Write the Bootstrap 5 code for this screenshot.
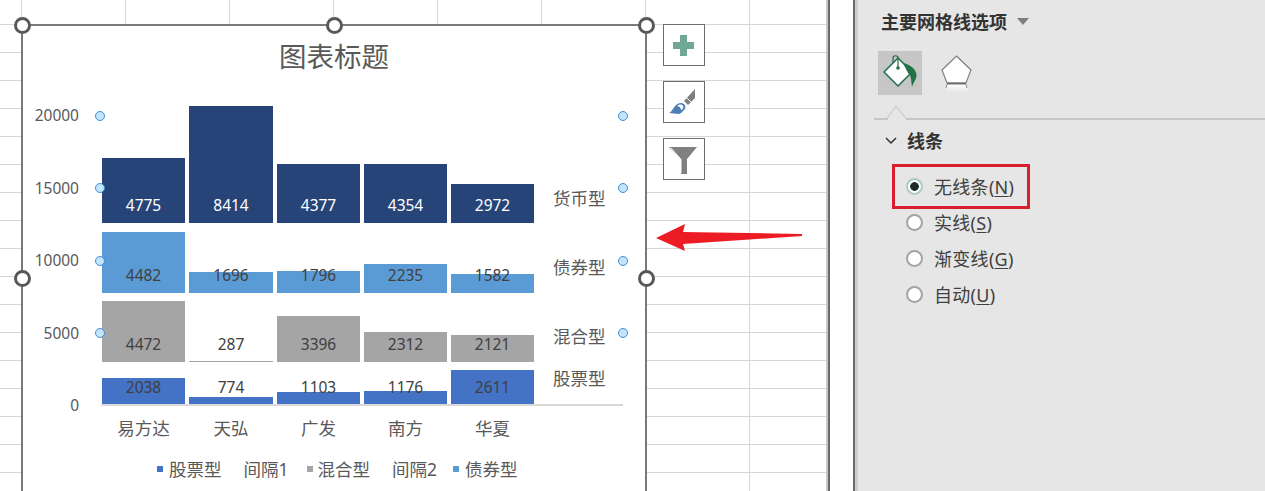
<!DOCTYPE html>
<html lang="zh-CN">
<head>
    <meta charset="UTF-8" />
    <title>图表标题</title>
    <link rel="stylesheet" href="https://cdn.jsdelivr.net/npm/bootstrap@5.3.0/dist/css/bootstrap.min.css" />
    <style>
        html, body { height: 491px; overflow: hidden; }
        body { font-family: "Noto Sans", "Noto Sans CJK SC", sans-serif; background: #fff; color: #404040; }

        /* worksheet */
        .sheet-frame { width: 830px; border-right: 2px solid #6a6a6a; }
        .sheet-area {
            border-right: 2px solid #c8c8c8;
            background-image: linear-gradient(#d6d6d6 1px, transparent 1px), linear-gradient(90deg, #d6d6d6 1px, transparent 1px);
            background-size: 104px 28px;
            background-position: 21px 24px;
        }
        .sheet-gutter { width: 23px; }

        /* chart */
        .chart-box { left: 21px; top: 24px; width: 626px; height: 520px; background: #fff; border: 2px solid #7a7a7a; }
        .chart-title { margin-top: 11px; height: 40px; line-height: 40px; font-size: 27.5px; color: #595959; text-align: center; }
        .plot-row { margin-top: 26px; }
        .y-axis { width: 56px; height: 314px; font-size: 15.5px; line-height: 24px; color: #595959; text-align: right; }
        .plot-body { margin: 3px 0 0 23px; }
        .bar-band { display: grid; grid-template-columns: 83px 84px 83px 83px 83px 85px; column-gap: 4px; }
        .band-a { height: 117px; }
        .band-b { height: 70px; }
        .band-c { height: 69px; }
        .band-d { height: 42px; }
        .bar-cell { position: relative; display: flex; align-items: flex-end; }
        .bar-fill { width: 100%; }
        .fill-navy { background: #264478; }
        .fill-sky { background: #5b9bd5; }
        .fill-grey { background: #a5a5a5; }
        .fill-blue { background: #4472c4; }
        .bar-num { position: absolute; left: 0; right: 0; bottom: 6px; font-size: 15.5px; line-height: 24px; text-align: center; color: #404040; }
        .band-a .bar-num { color: #fff; }
        .band-d .bar-num { bottom: 5px; }
        .series-name { align-self: flex-end; padding: 0 0 14px 15px; font-size: 17.5px; line-height: 24px; color: #595959; white-space: nowrap; }
        .band-a .series-name { padding-bottom: 13px; }
        .axis-line { width: 522px; margin-left: -1px; border-top: 2px solid #d9d9d9; }
        .cat-row { margin-top: 10px; }
        .cat-name { font-size: 17.5px; line-height: 24px; color: #595959; text-align: center; }
        .chart-legend { margin: 17px 0 0 134px; font-size: 17.5px; line-height: 24px; color: #595959; }
        .legend-swatch { width: 6px; height: 6px; margin-right: 6px; }
        .legend-swatch.snug { margin-right: 5px; }
        .legend-item { margin-right: 22px; }
        .legend-item.gap-wide { margin-right: 18px; }
        .legend-item.gap-thin { margin-right: 16px; }

        /* selection handles */
        .grip { position: absolute; width: 17px; height: 17px; margin: -8.5px 0 0 -8.5px; background: #fff; border: 3px solid #595959; border-radius: 50%; }
        .grip-l { left: -1px; }
        .grip-c { left: 311px; }
        .grip-r { left: 623px; }
        .grip-t { top: -1px; }
        .grip-m { top: 252px; }
        .pin { position: absolute; width: 10px; height: 10px; margin: -5px 0 0 -5px; background: #c3e4fb; border: 1px solid #3d8fd6; border-radius: 50%; }
        .pin-l { left: 77px; }
        .pin-r { left: 600px; }
        .pin-1 { top: 90px; }
        .pin-2 { top: 162px; }
        .pin-3 { top: 235px; }
        .pin-4 { top: 307px; }

        .chart-tools { left: 663px; top: 24px; gap: 15px; }
        .tool-btn { width: 42px; height: 42px; padding: 0; background: #fff; border: 1px solid #6d6d6d; border-radius: 0; line-height: 0; }
        .note-arrow { left: 656px; top: 222px; }

        /* format pane */
        .pane-side { border-left: 2px solid #6a6a6a; }
        .pane-body { border-left: 3px solid #cdcdcd; background: #e6e6e6; padding: 10px 0 0 23px; }
        .pane-title { font-size: 18px; line-height: 24px; font-weight: 700; color: #333; gap: 10px; }
        .pane-caret { width: 0; height: 0; border-left: 6.5px solid transparent; border-right: 6.5px solid transparent; border-top: 7px solid #7f7f7f; margin-top: -2px; }
        .pane-tabs { margin: 17px 0 0 -3px; gap: 17px; }
        .tab-on { width: 44px; height: 44px; background: #c6c6c6; }
        .tab-off { width: 34px; height: 44px; }
        .pane-rule { display: block; margin: 9px 0 0 -7px; }
        .section-head { margin-top: 9px; font-size: 18px; line-height: 24px; font-weight: 700; color: #333; }
        .section-chevron { margin: 0 10px 0 4px; }
        .radio-list { margin-top: 16px; }
        .radio-row { position: relative; height: 36px; margin: 0 0 0 25px; padding: 0; gap: 11px; font-size: 18px; letter-spacing: .3px; color: #404040; }
        .radio-row .form-check-input {
            width: 17px; height: 17px; margin: -2px 0 0; float: none; flex: none;
            background-color: #fff; border: 2px solid #a3a3a3;
        }
        .radio-row .form-check-input:checked {
            background-color: #fff; border-color: #a9cdbb;
            --bs-form-check-bg-image: radial-gradient(circle, #1e2b26 0, #1e2b26 4px, transparent 4.6px);
        }
        .radio-row u { text-underline-offset: 2px; }
        .mark-box { position: absolute; left: -14px; top: -5px; width: 138px; height: 45px; border: 3px solid #d81f2e; pointer-events: none; }
    </style>
</head>
<body>

<div class="d-flex" style="height:491px">
    <div class="sheet-frame flex-shrink-0 d-flex">
        <div class="sheet-area flex-grow-1 position-relative overflow-hidden">

            <div class="chart-box position-absolute">
                <div class="chart-title">图表标题</div>

                <div class="plot-row d-flex">
                    <div class="y-axis d-flex flex-column justify-content-between">
                        <div>20000</div>
                        <div>15000</div>
                        <div>10000</div>
                        <div>5000</div>
                        <div>0</div>
                    </div>
                    <div class="plot-body">
                        <div class="bar-band band-a">
                            <div class="bar-cell"><div class="bar-fill fill-navy" style="height:65px"></div><span class="bar-num">4775</span></div>
                            <div class="bar-cell"><div class="bar-fill fill-navy" style="height:117px"></div><span class="bar-num">8414</span></div>
                            <div class="bar-cell"><div class="bar-fill fill-navy" style="height:59px"></div><span class="bar-num">4377</span></div>
                            <div class="bar-cell"><div class="bar-fill fill-navy" style="height:59px"></div><span class="bar-num">4354</span></div>
                            <div class="bar-cell"><div class="bar-fill fill-navy" style="height:39px"></div><span class="bar-num">2972</span></div>
                            <div class="series-name">货币型</div>
                        </div>
                        <div class="bar-band band-b">
                            <div class="bar-cell"><div class="bar-fill fill-sky" style="height:61px"></div><span class="bar-num">4482</span></div>
                            <div class="bar-cell"><div class="bar-fill fill-sky" style="height:21px"></div><span class="bar-num">1696</span></div>
                            <div class="bar-cell"><div class="bar-fill fill-sky" style="height:22px"></div><span class="bar-num">1796</span></div>
                            <div class="bar-cell"><div class="bar-fill fill-sky" style="height:29px"></div><span class="bar-num">2235</span></div>
                            <div class="bar-cell"><div class="bar-fill fill-sky" style="height:19px"></div><span class="bar-num">1582</span></div>
                            <div class="series-name">债券型</div>
                        </div>
                        <div class="bar-band band-c">
                            <div class="bar-cell"><div class="bar-fill fill-grey" style="height:61px"></div><span class="bar-num">4472</span></div>
                            <div class="bar-cell"><div class="bar-fill fill-grey" style="height:1px"></div><span class="bar-num">287</span></div>
                            <div class="bar-cell"><div class="bar-fill fill-grey" style="height:46px"></div><span class="bar-num">3396</span></div>
                            <div class="bar-cell"><div class="bar-fill fill-grey" style="height:30px"></div><span class="bar-num">2312</span></div>
                            <div class="bar-cell"><div class="bar-fill fill-grey" style="height:27px"></div><span class="bar-num">2121</span></div>
                            <div class="series-name">混合型</div>
                        </div>
                        <div class="bar-band band-d">
                            <div class="bar-cell"><div class="bar-fill fill-blue" style="height:26px"></div><span class="bar-num">2038</span></div>
                            <div class="bar-cell"><div class="bar-fill fill-blue" style="height:7px"></div><span class="bar-num">774</span></div>
                            <div class="bar-cell"><div class="bar-fill fill-blue" style="height:12px"></div><span class="bar-num">1103</span></div>
                            <div class="bar-cell"><div class="bar-fill fill-blue" style="height:13px"></div><span class="bar-num">1176</span></div>
                            <div class="bar-cell"><div class="bar-fill fill-blue" style="height:34px"></div><span class="bar-num">2611</span></div>
                            <div class="series-name">股票型</div>
                        </div>
                        <div class="axis-line"></div>
                        <div class="bar-band cat-row">
                            <div class="cat-name">易方达</div>
                            <div class="cat-name">天弘</div>
                            <div class="cat-name">广发</div>
                            <div class="cat-name">南方</div>
                            <div class="cat-name">华夏</div>
                        </div>
                    </div>
                </div>

                <div class="chart-legend d-flex align-items-center">
                    <div class="legend-item d-flex align-items-center"><span class="legend-swatch fill-blue"></span>股票型</div>
                    <div class="legend-item gap-wide">间隔1</div>
                    <div class="legend-item d-flex align-items-center"><span class="legend-swatch snug fill-grey"></span>混合型</div>
                    <div class="legend-item gap-thin">间隔2</div>
                    <div class="legend-item d-flex align-items-center"><span class="legend-swatch fill-sky"></span>债券型</div>
                </div>

                <span class="grip grip-l grip-t"></span>
                <span class="grip grip-c grip-t"></span>
                <span class="grip grip-r grip-t"></span>
                <span class="grip grip-l grip-m"></span>
                <span class="grip grip-r grip-m"></span>
                <span class="pin pin-l pin-1"></span>
                <span class="pin pin-l pin-2"></span>
                <span class="pin pin-l pin-3"></span>
                <span class="pin pin-l pin-4"></span>
                <span class="pin pin-r pin-1"></span>
                <span class="pin pin-r pin-2"></span>
                <span class="pin pin-r pin-3"></span>
                <span class="pin pin-r pin-4"></span>
            </div>

            <div class="chart-tools position-absolute d-flex flex-column">
                <button type="button" class="btn tool-btn" aria-label="chart elements">
                    <svg width="40" height="40" viewBox="0 0 40 40"><path fill="#6fa894" d="M16 10h7v7h7v7h-7v7h-7v-7H9v-7h7z"/></svg>
                </button>
                <button type="button" class="btn tool-btn" aria-label="chart styles">
                    <svg width="40" height="40" viewBox="0 0 40 40">
                        <path fill="#7f7f7f" d="M31 7v9l-7 7-4-4z"/>
                        <path stroke="#fff" stroke-width="1" d="M22 15l5 5"/>
                        <path fill="#4d7fb5" d="M5 31c3-1 4-5 7-8 2-2 6-3 8-1 2 2 2 5-1 7-1 1-3 3-4 3z"/>
                        <path fill="#fff" d="M13 24c2-2 5-2 6 0 1 2-1 4-2 4 0-2-2-4-4-4z"/>
                    </svg>
                </button>
                <button type="button" class="btn tool-btn" aria-label="chart filters">
                    <svg width="40" height="40" viewBox="0 0 40 40">
                        <path fill="#808080" d="M5 8h28L23 20v15h-6V20z"/>
                        <path fill="none" stroke="#fff" stroke-width="1" d="M7 9l10 11.500V34"/>
                    </svg>
                </button>
            </div>

            <svg class="note-arrow position-absolute" width="148" height="30" viewBox="0 0 148 30">
                <path fill="#ed1c24" d="M0 16L29 2 27 10 146 12v2L27 22 29 29z"/>
            </svg>
        </div>
    </div>

    <div class="sheet-gutter flex-shrink-0"></div>

    <div class="pane-side flex-grow-1 d-flex">
        <div class="pane-body flex-grow-1">
            <div class="pane-title d-flex align-items-center">主要网格线选项<span class="pane-caret"></span></div>

            <div class="pane-tabs d-flex">
                <div class="tab-on">
                    <svg width="44" height="44" viewBox="0 0 44 44">
                        <path fill="#fff" stroke="#1f6e49" stroke-width="1.500" d="M20 7L34 21 20 35 6 21z"/>
                        <path fill="none" stroke="#1f6e49" stroke-width="1.200" d="M15 12V7c0-3 5-3 5 0v9"/>
                        <circle cx="20" cy="17" r="1.800" fill="#1f6e49"/>
                        <path fill="#217346" d="M25 12c6 1 14 6 13.500 13-.5 4-3 6-4.500 11l-1-8-1-4-2-2z"/>
                    </svg>
                </div>
                <div class="tab-off">
                    <svg width="34" height="44" viewBox="0 0 34 44">
                        <defs>
                            <linearGradient id="pentaFade" x1="0" y1="0" x2="0" y2="1">
                                <stop offset="0" stop-color="#fff"/>
                                <stop offset="1" stop-color="#fff" stop-opacity="0"/>
                            </linearGradient>
                        </defs>
                        <path fill="url(#pentaFade)" d="M7 33h21l1 8H6z"/>
                        <path fill="#fff" stroke="#7f7f7f" stroke-width="1.200" d="M17.500 5L32 19 27 32H8L3 19z"/>
                        <path stroke="#6f6f6f" stroke-width="2" d="M8 32.500h19"/>
                        <path stroke="#8c8c8c" stroke-width="1" fill="none" d="M8 33l-1 4M27 33l1 4"/>
                    </svg>
                </div>
            </div>

            <svg class="pane-rule" width="400" height="16" viewBox="0 0 400 16">
                <path fill="none" stroke="#d2d2d2" stroke-width="1.500" d="M13 14.500L22 2l10 12.500"/>
                <path stroke="#c6c6c6" stroke-width="2" d="M0 15h14M32 15h368"/>
            </svg>

            <div class="section-head d-flex align-items-center">
                <svg class="section-chevron" width="12" height="8" viewBox="0 0 12 8"><path fill="none" stroke="#333" stroke-width="1.500" d="M1 1l5 5 5-5"/></svg>线条
            </div>

            <div class="radio-list">
                <label class="radio-row form-check d-flex align-items-center">
                    <input class="form-check-input" type="radio" name="lineKind" checked />
                    <span>无线条(<u>N</u>)</span>
                    <span class="mark-box"></span>
                </label>
                <label class="radio-row form-check d-flex align-items-center">
                    <input class="form-check-input" type="radio" name="lineKind" />
                    <span>实线(<u>S</u>)</span>
                </label>
                <label class="radio-row form-check d-flex align-items-center">
                    <input class="form-check-input" type="radio" name="lineKind" />
                    <span>渐变线(<u>G</u>)</span>
                </label>
                <label class="radio-row form-check d-flex align-items-center">
                    <input class="form-check-input" type="radio" name="lineKind" />
                    <span>自动(<u>U</u>)</span>
                </label>
            </div>
        </div>
    </div>
</div>

<script src="https://cdn.jsdelivr.net/npm/bootstrap@5.3.0/dist/js/bootstrap.bundle.min.js"></script>
</body>
</html>
